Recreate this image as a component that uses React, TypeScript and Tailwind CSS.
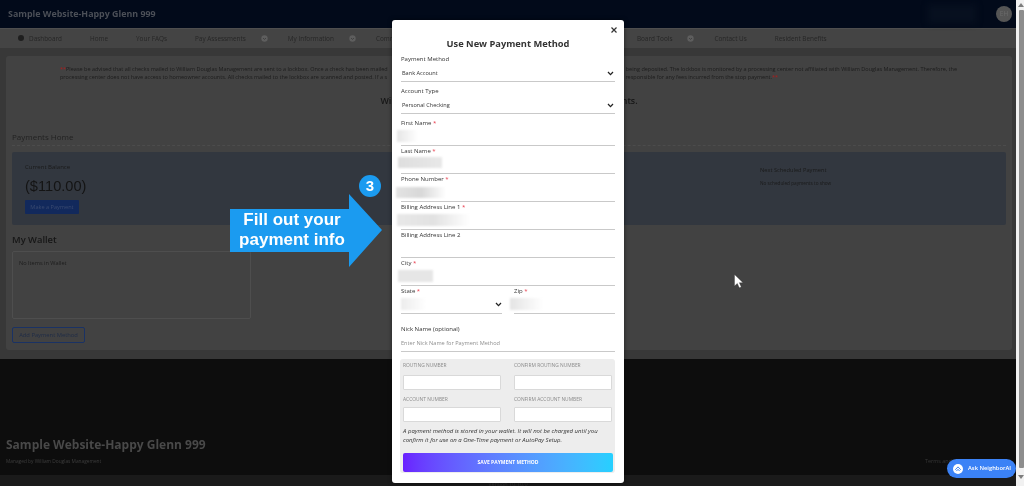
import React from "react";

const sans = { fontFamily: '"Open Sans", sans-serif' };

function NavDot() {
  return (
    <svg width="7" height="7" viewBox="0 0 7 7" className="ml-[-13px] mr-[-8px] shrink-0">
      <circle cx="3.5" cy="3.5" r="3.2" fill="#5e5e5e" />
      <path d="M2 3l1.5 1.4L5 3" fill="none" stroke="#3a3a3a" strokeWidth="0.8" />
    </svg>
  );
}

function Chevron() {
  return (
    <svg width="7" height="5" viewBox="0 0 7 5" className="shrink-0">
      <path d="M1 1l2.5 2.6L6 1" fill="none" stroke="#222" strokeWidth="1.3" />
    </svg>
  );
}

function Req() {
  return <span className="text-[#e8394a]"> *</span>;
}

function Field({ label, req, blob, className }: { label: string; req?: boolean; blob?: React.ReactNode; className?: string }) {
  return (
    <div className={`flex flex-col border-b border-[#c9c9c9] h-[28px] ${className ?? ""}`}>
      <div className="text-[6px] leading-[8px] text-[#333] h-[8px] mt-[1px]">
        {label}
        {req && <Req />}
      </div>
      <div className="flex-1 flex items-center">{blob}</div>
    </div>
  );
}

function SelectRow({ label, value }: { label: string; value: string }) {
  return (
    <div className="flex flex-col h-[32px] border-b border-[#c9c9c9]">
      <div className="text-[6px] leading-[8px] text-[#333] mt-[5px]">{label}</div>
      <div className="flex-1 flex items-center justify-between pl-[1px] pr-[1px] pt-[2px]">
        <span className="text-[5.6px] leading-[8px] text-[#333]">{value}</span>
        <Chevron />
      </div>
    </div>
  );
}

function BankInput({ label, labelClass }: { label: string; labelClass: string }) {
  return (
    <div className="flex flex-col w-[98px]">
      <div className={`text-[4.9px] leading-[7px] text-[#8a8a8a] uppercase ${labelClass}`}>{label}</div>
      <div className="h-[15px] bg-white border border-[#d9d9d9] rounded-[1px]" />
    </div>
  );
}

function Modal() {
  return (
    <div
      style={sans}
      className="absolute left-[392px] top-[20px] w-[232px] h-[463px] bg-white rounded-[3px] px-[9px] shadow-[0_0_4px_rgba(0,0,0,0.5)] flex flex-col"
    >
      <div className="absolute right-[7px] top-[7px]">
        <svg width="6" height="6" viewBox="0 0 6 6" className="block">
          <path d="M0.5 0.5l5 5M5.5 0.5l-5 5" stroke="#333" strokeWidth="1.2" />
        </svg>
      </div>
      <div className="text-[9.3px] leading-[14px] font-bold text-[#333] text-center mt-[17px] h-[13px] shrink-0 whitespace-nowrap">Use New Payment Method</div>
      <SelectRow label="Payment Method" value="Bank Account" />
      <SelectRow label="Account Type" value="Personal Checking" />
      <div className="h-[4px] shrink-0" />
      <Field label="First Name" req blob={<div className="ml-[-4px] w-[21px] h-[12px] bg-gradient-to-r from-[#e6e6e6] to-white blur-[1px]" />} />
      <Field label="Last Name" req blob={<div className="ml-[-3px] mt-[-3px] w-[44px] h-[11px] bg-gradient-to-r from-[#dedede] to-[#e8e8e8] blur-[1px]" />} />
      <Field label="Phone Number" req blob={<div className="ml-[-5px] w-[50px] h-[11px] bg-gradient-to-r from-[#e3e3e3] via-[#d8d8d8] to-white blur-[1px]" />} />
      <Field label="Billing Address Line 1" req blob={<div className="ml-[-4px] w-[73px] h-[12px] bg-gradient-to-r from-[#e8e8e8] via-[#e2e2e2] to-white blur-[1px]" />} />
      <Field label="Billing Address Line 2" />
      <Field label="City" req blob={<div className="ml-[-3px] w-[35px] h-[12px] bg-[#e6e6e6] blur-[1px]" />} />
      <div className="flex gap-[12px] shrink-0">
        <Field
          label="State"
          req
          className="w-[101px]"
          blob={
            <div className="flex items-center justify-between w-full">
              <div className="w-[25px] h-[12px] bg-gradient-to-r from-[#ececec] to-white blur-[1px]" />
              <Chevron />
            </div>
          }
        />
        <Field label="Zip" req className="flex-1" blob={<div className="ml-[-4px] w-[33px] h-[12px] bg-gradient-to-r from-[#e4e4e4] to-white blur-[1px]" />} />
      </div>
      <div className="flex flex-col h-[38px] shrink-0 border-b border-[#c9c9c9]">
        <div className="text-[6px] leading-[8px] text-[#333] mt-[11px]">Nick Name (optional)</div>
        <div className="flex-1 flex items-center pt-[1px] text-[5.6px] leading-[8px] text-[#8f8f8f]">Enter Nick Name for Payment Method</div>
      </div>
      <div className="mt-[7px] ml-[-1px] h-[114px] shrink-0 bg-[#ededed] rounded-[3px] px-[3px] pt-[3px] flex flex-col">
        <div className="flex justify-between">
          <BankInput label="Routing Number" labelClass="h-[13px]" />
          <BankInput label="Confirm Routing Number" labelClass="h-[13px]" />
        </div>
        <div className="flex justify-between mt-[6px]">
          <BankInput label="Account Number" labelClass="h-[11px]" />
          <BankInput label="Confirm Account Number" labelClass="h-[11px]" />
        </div>
        <p className="text-[6px] leading-[9px] italic text-[#333] mt-[5px]">
          A payment method is stored in your wallet. It will not be charged until you confirm it for use on a One-Time payment or AutoPay Setup.
        </p>
        <div className="mt-[8px] mr-[-1px] h-[19px] shrink-0 rounded-[2px] bg-gradient-to-r from-[#6a1fff] to-[#25d0ff] flex items-center justify-center text-white text-[5px] font-bold uppercase">
          Save Payment Method
        </div>
      </div>
    </div>
  );
}

export default function App() {
  return (
    <div style={sans} className="relative flex w-[1024px] h-[486px] overflow-hidden bg-[#1a1a1a] [filter:blur(0.3px)]">
      <div className="flex flex-col w-[1016px] h-[486px]">
        <header className="h-[28px] shrink-0 bg-[#020a1a] flex items-center justify-between pl-[8px] pr-[4px]">
          <div className="text-[8.9px] font-bold text-[#4b4f57]">Sample Website-Happy Glenn 999</div>
          <div className="flex items-center gap-[20px]">
            <div className="w-[48px] h-[18px] bg-[#07101f] blur-[3px]" />
            <div className="w-[16px] h-[16px] rounded-full bg-[#555] flex items-center justify-center text-[6.5px] text-[#6c6c6c]">EH</div>
          </div>
        </header>
        <nav className="h-[20px] shrink-0 bg-[#444444] flex items-center pl-[18px] gap-[28px] text-[6.4px] text-[#262626] whitespace-nowrap border-t border-[#4e4e4e]">
          <div className="flex items-center gap-[5px]">
            <span className="w-[6px] h-[6px] rounded-full bg-[#1e1e1e]" />
            <span>Dashboard</span>
          </div>
          <span>Home</span>
          <span>Your FAQs</span>
          <span>Pay Assessments</span>
          <NavDot />
          <span>My Information</span>
          <NavDot />
          <span className="w-[233px]">Community</span>
          <span>Board Tools</span>
          <NavDot />
          <span>Contact Us</span>
          <span>Resident Benefits</span>
        </nav>
        <main className="h-[311px] shrink-0 bg-[#383838] pl-[6px] pr-[4px] pt-[8px]">
          <div className="h-[294px] bg-[#424242] rounded-[3px] px-[6px] flex flex-col">
            <div className="mt-[9px] pl-[48px] pr-[49px] text-[5.5px] leading-[8px] text-[#1c1c1c] whitespace-nowrap overflow-hidden h-[16px] shrink-0">
              <div className="flex justify-between">
                <span><span className="text-[#b01c1c]">**</span>Please be advised that all checks mailed to William Douglas Management are sent to a lockbox. Once a check has been mailed</span>
                <span>being deposited. The lockbox is monitored by a processing center not affiliated with William Douglas Management. Therefore, the</span>
              </div>
              <div className="flex justify-between pr-[179px]">
                <span>processing center does not have access to homeowner accounts. All checks mailed to the lockbox are scanned and posted. If a s</span>
                <span>responsible for any fees incurred from the stop payment.<span className="text-[#b01c1c]">**</span></span>
              </div>
            </div>
            <div className="mt-[14px] text-center text-[8.8px] leading-[12px] font-semibold text-[#161616] whitespace-nowrap">William Douglas Management only accepts online payments.</div>
            <div className="mt-[24px] text-[8px] leading-[12px] text-[#222] h-[15px] border-b border-dashed border-[#4c4c4c]">Payments Home</div>
            <section className="mt-[6px] h-[73px] shrink-0 bg-[#32373f] rounded-[2px] flex justify-between pl-[13px]">
              <div className="flex flex-col">
                <div className="mt-[11px] text-[6px] leading-[8px] text-[#1a1a1a]">Current Balance</div>
                <div className="mt-[6px] text-[14.6px] leading-[18px] text-[#141414]" style={{ fontFamily: '"Liberation Sans", sans-serif' }}>($110.00)</div>
                <div className="mt-[5px] w-[54px] h-[14px] bg-[#12295c] rounded-[1px] flex items-center justify-center text-[5.6px] text-[#3a4a70]">Make a Payment</div>
              </div>
              <div className="flex flex-col w-[246px]">
                <div className="mt-[14px] text-[5.7px] leading-[8px] text-[#1a1a1a]">Next Scheduled Payment</div>
                <div className="mt-[5px] text-[4.7px] leading-[8px] text-[#1a1a1a]">No scheduled payments to show</div>
              </div>
            </section>
            <div className="mt-[9px] text-[9.4px] leading-[12px] font-semibold text-[#161616]">My Wallet</div>
            <div className="mt-[5px] w-[239px] h-[68px] shrink-0 border border-[#4e4e4e] rounded-[2px] px-[6px] pt-[7px] text-[5.6px] leading-[8px] text-[#1c1c1c]">No Items in Wallet</div>
            <div className="mt-[8px] w-[73px] h-[16px] shrink-0 border border-[#1a3264] rounded-[2px] flex items-center justify-center text-[5.8px] text-[#1f2c47]">Add Payment Method</div>
          </div>
        </main>
        <footer className="h-[116px] shrink-0 bg-[#0d0d0d] px-[6px] flex items-end justify-between pb-[10px]">
          <div className="flex flex-col">
            <div className="text-[12px] leading-[16px] font-bold text-[#494949]">Sample Website-Happy Glenn 999</div>
            <div className="mt-[5px] text-[4.8px] leading-[7px] text-[#3e3e3e]">Managed by William Douglas Management</div>
          </div>
          <div className="text-[5.4px] leading-[7px] text-[#363636] mr-[22px] w-[63px]">Terms and Conditions</div>
        </footer>
        <div className="h-[11px] shrink-0 bg-[#1a1a1a] pt-[6px] text-center text-[5.5px] leading-[7px] text-[#303030]">Version 10.10.0</div>
      </div>

      <div className="w-[8px] h-[486px] bg-[#f1f1f1] flex flex-col items-center pl-[2px]">
        <svg width="6" height="4" viewBox="0 0 6 4" className="mt-[3px]"><path d="M3 0l3 4H0z" fill="#7d7d7d" /></svg>
        <div className="mt-[3px] w-[5px] h-[458px] bg-[#8d8d8d] rounded-[1px]" />
        <svg width="6" height="4" viewBox="0 0 6 4" className="mt-[7px]"><path d="M3 4L0 0h6z" fill="#7d7d7d" /></svg>
      </div>

      <Modal />

      <svg width="153" height="74" viewBox="0 0 153 74" className="absolute left-[230px] top-[194px]">
        <polygon points="0,15 119,15 119,0 152,36 119,73 119,58 0,58" fill="#1b9bf0" />
      </svg>
      <div className="absolute left-[230px] top-[210px] w-[124px] text-center text-white font-bold text-[17px] leading-[20px]" style={{ fontFamily: '"Liberation Sans", sans-serif' }}>
        <div>Fill out your</div>
        <div>payment info</div>
      </div>
      <div className="absolute left-[359px] top-[175px] w-[22px] h-[22px] rounded-full bg-[#1b9bf0] flex items-center justify-center text-white font-bold text-[15px]" style={{ fontFamily: '"Liberation Sans", sans-serif' }}>3</div>

      <svg width="10" height="15" viewBox="0 0 10 15" className="absolute left-[734px] top-[274px]">
        <path d="M0.5 0.5v11.5l2.8-2.6 2 4.4 2-0.9-2-4.2h3.7z" fill="#fff" stroke="#222" strokeWidth="0.3" />
      </svg>

      <div className="absolute left-[947px] top-[459px] w-[69px] h-[19px] rounded-full bg-[#3b82f6] flex items-center pl-[6px] gap-[5px] text-white font-semibold text-[5.8px] whitespace-nowrap">
        <svg width="10" height="10" viewBox="0 0 9 9" className="shrink-0">
          <circle cx="4.5" cy="4.5" r="4.5" fill="#fff" />
          <path d="M2 5.2L4.5 2.6 7 5.2M3 6.4L4.5 4.8 6 6.4" fill="none" stroke="#3b82f6" strokeWidth="0.9" />
        </svg>
        <span>Ask NeighborAI</span>
      </div>
    </div>
  );
}
